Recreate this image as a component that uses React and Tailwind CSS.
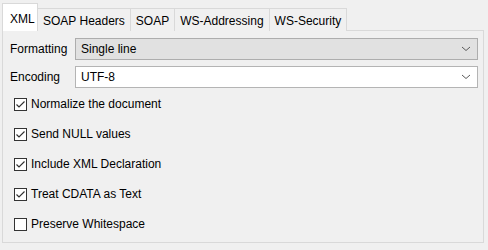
import React from "react";

function Chevron() {
  return (
    <svg width="10" height="6" viewBox="0 0 10 6" className="block">
      <path d="M1 1 L5 4.5 L9 1" fill="none" stroke="#5a5a5a" strokeWidth="1" />
    </svg>
  );
}

function Check({ checked, label }) {
  return (
    <div className="flex h-[30px] items-center">
      <div className="ml-[8px] flex h-[13px] w-[13px] items-center justify-center border border-[#333333] bg-white">
        {checked && (
          <svg width="11" height="11" viewBox="0 0 11 11" className="block">
            <path d="M1.5 5.5 L4 8 L9.5 2.5" fill="none" stroke="#333333" strokeWidth="1.2" />
          </svg>
        )}
      </div>
      <span className="ml-[4px]">{label}</span>
    </div>
  );
}

export default function App() {
  const tabs = ["SOAP Headers", "SOAP", "WS-Addressing", "WS-Security"];
  return (
    <div
      className="h-[250px] w-[488px] overflow-hidden bg-[#f0f0f0] px-[2px] pt-[3px] text-[12px] leading-none text-black"
      style={{ fontFamily: '"Liberation Sans", Arial, sans-serif' }}
    >
      <div className="relative z-10 flex h-[28px] items-end">
        <div className="flex h-[28px] w-[36px] items-start border border-b-0 border-[#d9d9d9] bg-white pl-[7px] pt-[9px]">
          XML
        </div>
        {tabs.map((t) => (
          <div
            key={t}
            className="flex h-[23px] items-center border border-l-0 border-b-0 border-[#d9d9d9] bg-[#f0f0f0] px-[5px] pt-[1px]"
          >
            {t}
          </div>
        ))}
      </div>
      <div className="-mt-px h-[213px] w-[482px] border border-[#d9d9d9] bg-[#f0f0f0] pl-[3px] pt-[7px]">
        <div className="flex h-[22px] items-center">
          <span className="w-[68px] pl-[4px]">Formatting</span>
          <div className="ml-[1px] flex h-[22px] w-[403px] items-center justify-between border border-[#adadad] bg-[#e1e1e1] pl-[5px] pr-[6px]">
            <span>Single line</span>
            <Chevron />
          </div>
        </div>
        <div className="mt-[6px] flex h-[22px] items-center">
          <span className="w-[68px] pl-[4px]">Encoding</span>
          <div className="ml-[1px] flex h-[22px] w-[403px] items-center justify-between border border-[#b4b4b4] bg-white pl-[5px] pr-[6px]">
            <span>UTF-8</span>
            <Chevron />
          </div>
        </div>
        <div className="mt-[1px] flex flex-col">
          <Check checked label="Normalize the document" />
          <Check checked label="Send NULL values" />
          <Check checked label="Include XML Declaration" />
          <Check checked label="Treat CDATA as Text" />
          <Check checked={false} label="Preserve Whitespace" />
        </div>
      </div>
    </div>
  );
}
